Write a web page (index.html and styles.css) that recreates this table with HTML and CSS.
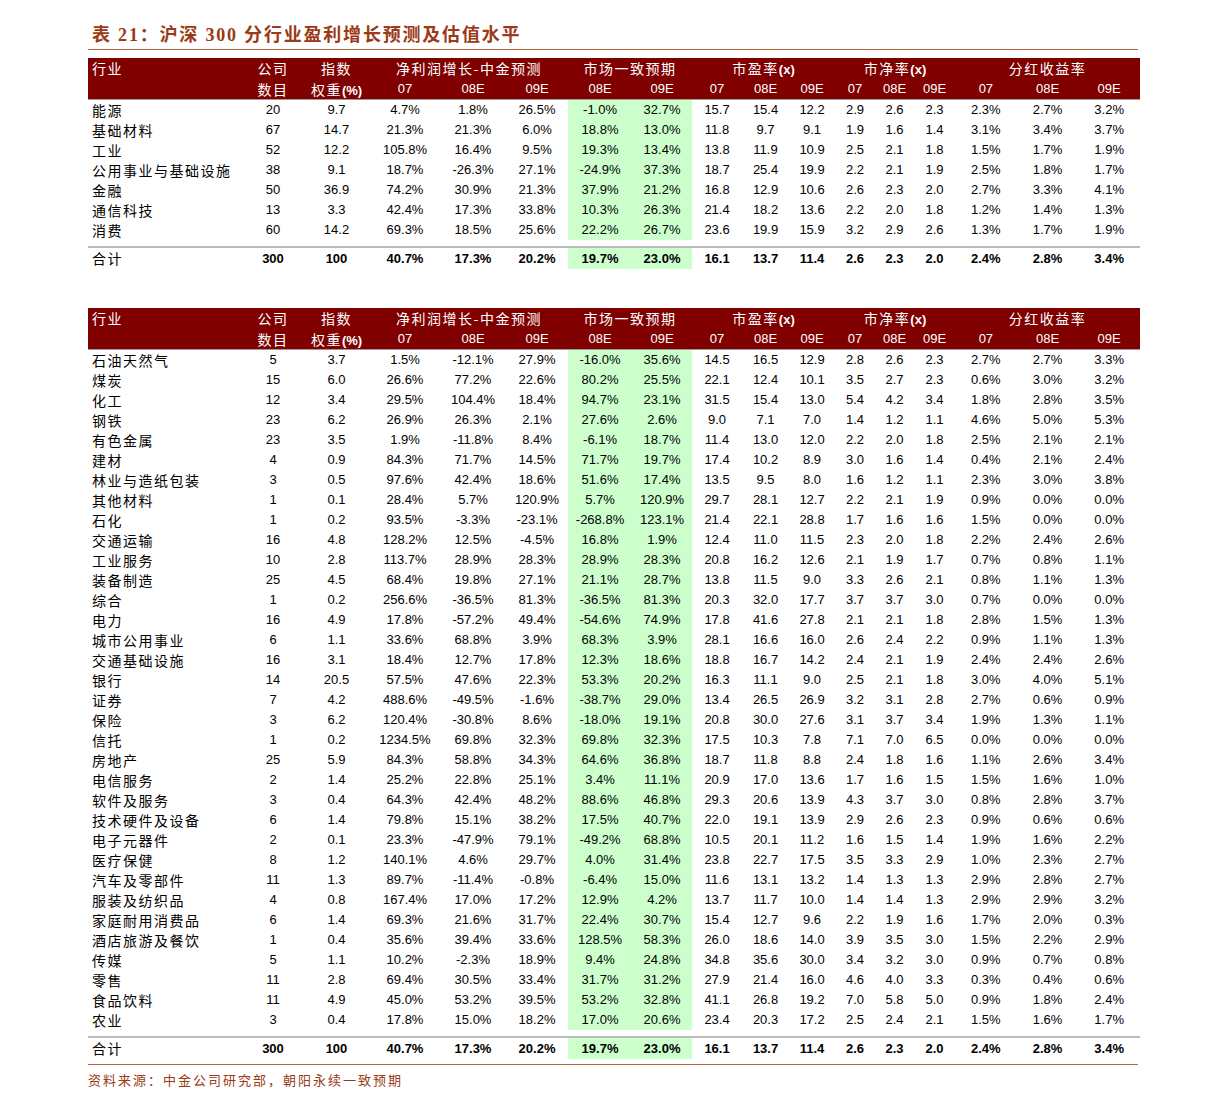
FILE: index.html
```html
<!DOCTYPE html>
<html lang="zh-CN">
<head>
<meta charset="utf-8">
<title>沪深300分行业盈利增长预测及估值水平</title>
<link rel="stylesheet" href="styles.css">
</head>
<body>
<div class="page">
  <div class="title">表 21：沪深 300 分行业盈利增长预测及估值水平</div>

  <table class="tbl t1">
    <colgroup>
      <col class="c-name"><col class="c-n"><col class="c-w"><col class="c-a"><col class="c-b"><col class="c-c">
      <col class="c-g1 g"><col class="c-g2 g">
      <col class="c-p"><col class="c-p2"><col class="c-p3">
      <col class="c-q"><col class="c-q2"><col class="c-q3">
      <col class="c-d"><col class="c-d"><col class="c-d">
    </colgroup>
    <thead>
      <tr class="h1">
        <th class="name cn">行业</th><th class="cn">公司</th><th class="cn">指数</th>
        <th class="cn" colspan="3">净利润增长-中金预测</th>
        <th class="cn" colspan="2">市场一致预期</th>
        <th class="cn" colspan="3">市盈率<b>(x)</b></th>
        <th class="cn" colspan="3">市净率<b>(x)</b></th>
        <th class="cn" colspan="3">分红收益率</th>
      </tr>
      <tr class="h2">
        <th></th><th class="cn">数目</th><th class="cn">权重<b>(%)</b></th>
        <th>07</th><th>08E</th><th>09E</th><th>08E</th><th>09E</th>
        <th>07</th><th>08E</th><th>09E</th><th>07</th><th>08E</th><th>09E</th>
        <th>07</th><th>08E</th><th>09E</th>
      </tr>
    </thead>
    <tbody>
      <tr><td class="name cn">能源</td><td>20</td><td>9.7</td><td>4.7%</td><td>1.8%</td><td>26.5%</td><td>-1.0%</td><td>32.7%</td><td>15.7</td><td>15.4</td><td>12.2</td><td>2.9</td><td>2.6</td><td>2.3</td><td>2.3%</td><td>2.7%</td><td>3.2%</td></tr>
      <tr><td class="name cn">基础材料</td><td>67</td><td>14.7</td><td>21.3%</td><td>21.3%</td><td>6.0%</td><td>18.8%</td><td>13.0%</td><td>11.8</td><td>9.7</td><td>9.1</td><td>1.9</td><td>1.6</td><td>1.4</td><td>3.1%</td><td>3.4%</td><td>3.7%</td></tr>
      <tr><td class="name cn">工业</td><td>52</td><td>12.2</td><td>105.8%</td><td>16.4%</td><td>9.5%</td><td>19.3%</td><td>13.4%</td><td>13.8</td><td>11.9</td><td>10.9</td><td>2.5</td><td>2.1</td><td>1.8</td><td>1.5%</td><td>1.7%</td><td>1.9%</td></tr>
      <tr><td class="name cn">公用事业与基础设施</td><td>38</td><td>9.1</td><td>18.7%</td><td>-26.3%</td><td>27.1%</td><td>-24.9%</td><td>37.3%</td><td>18.7</td><td>25.4</td><td>19.9</td><td>2.2</td><td>2.1</td><td>1.9</td><td>2.5%</td><td>1.8%</td><td>1.7%</td></tr>
      <tr><td class="name cn">金融</td><td>50</td><td>36.9</td><td>74.2%</td><td>30.9%</td><td>21.3%</td><td>37.9%</td><td>21.2%</td><td>16.8</td><td>12.9</td><td>10.6</td><td>2.6</td><td>2.3</td><td>2.0</td><td>2.7%</td><td>3.3%</td><td>4.1%</td></tr>
      <tr><td class="name cn">通信科技</td><td>13</td><td>3.3</td><td>42.4%</td><td>17.3%</td><td>33.8%</td><td>10.3%</td><td>26.3%</td><td>21.4</td><td>18.2</td><td>13.6</td><td>2.2</td><td>2.0</td><td>1.8</td><td>1.2%</td><td>1.4%</td><td>1.3%</td></tr>
      <tr><td class="name cn">消费</td><td>60</td><td>14.2</td><td>69.3%</td><td>18.5%</td><td>25.6%</td><td>22.2%</td><td>26.7%</td><td>23.6</td><td>19.9</td><td>15.9</td><td>3.2</td><td>2.9</td><td>2.6</td><td>1.3%</td><td>1.7%</td><td>1.9%</td></tr>
      <tr class="gap"><td colspan="17"></td></tr>
      <tr class="total"><td class="name cn">合计</td><td>300</td><td>100</td><td>40.7%</td><td>17.3%</td><td>20.2%</td><td>19.7%</td><td>23.0%</td><td>16.1</td><td>13.7</td><td>11.4</td><td>2.6</td><td>2.3</td><td>2.0</td><td>2.4%</td><td>2.8%</td><td>3.4%</td></tr>
    </tbody>
  </table>

  <table class="tbl t2">
    <colgroup>
      <col class="c-name"><col class="c-n"><col class="c-w"><col class="c-a"><col class="c-b"><col class="c-c">
      <col class="c-g1 g"><col class="c-g2 g">
      <col class="c-p"><col class="c-p2"><col class="c-p3">
      <col class="c-q"><col class="c-q2"><col class="c-q3">
      <col class="c-d"><col class="c-d"><col class="c-d">
    </colgroup>
    <thead>
      <tr class="h1">
        <th class="name cn">行业</th><th class="cn">公司</th><th class="cn">指数</th>
        <th class="cn" colspan="3">净利润增长-中金预测</th>
        <th class="cn" colspan="2">市场一致预期</th>
        <th class="cn" colspan="3">市盈率<b>(x)</b></th>
        <th class="cn" colspan="3">市净率<b>(x)</b></th>
        <th class="cn" colspan="3">分红收益率</th>
      </tr>
      <tr class="h2">
        <th></th><th class="cn">数目</th><th class="cn">权重<b>(%)</b></th>
        <th>07</th><th>08E</th><th>09E</th><th>08E</th><th>09E</th>
        <th>07</th><th>08E</th><th>09E</th><th>07</th><th>08E</th><th>09E</th>
        <th>07</th><th>08E</th><th>09E</th>
      </tr>
    </thead>
    <tbody>
      <tr><td class="name cn">石油天然气</td><td>5</td><td>3.7</td><td>1.5%</td><td>-12.1%</td><td>27.9%</td><td>-16.0%</td><td>35.6%</td><td>14.5</td><td>16.5</td><td>12.9</td><td>2.8</td><td>2.6</td><td>2.3</td><td>2.7%</td><td>2.7%</td><td>3.3%</td></tr>
      <tr><td class="name cn">煤炭</td><td>15</td><td>6.0</td><td>26.6%</td><td>77.2%</td><td>22.6%</td><td>80.2%</td><td>25.5%</td><td>22.1</td><td>12.4</td><td>10.1</td><td>3.5</td><td>2.7</td><td>2.3</td><td>0.6%</td><td>3.0%</td><td>3.2%</td></tr>
      <tr><td class="name cn">化工</td><td>12</td><td>3.4</td><td>29.5%</td><td>104.4%</td><td>18.4%</td><td>94.7%</td><td>23.1%</td><td>31.5</td><td>15.4</td><td>13.0</td><td>5.4</td><td>4.2</td><td>3.4</td><td>1.8%</td><td>2.8%</td><td>3.5%</td></tr>
      <tr><td class="name cn">钢铁</td><td>23</td><td>6.2</td><td>26.9%</td><td>26.3%</td><td>2.1%</td><td>27.6%</td><td>2.6%</td><td>9.0</td><td>7.1</td><td>7.0</td><td>1.4</td><td>1.2</td><td>1.1</td><td>4.6%</td><td>5.0%</td><td>5.3%</td></tr>
      <tr><td class="name cn">有色金属</td><td>23</td><td>3.5</td><td>1.9%</td><td>-11.8%</td><td>8.4%</td><td>-6.1%</td><td>18.7%</td><td>11.4</td><td>13.0</td><td>12.0</td><td>2.2</td><td>2.0</td><td>1.8</td><td>2.5%</td><td>2.1%</td><td>2.1%</td></tr>
      <tr><td class="name cn">建材</td><td>4</td><td>0.9</td><td>84.3%</td><td>71.7%</td><td>14.5%</td><td>71.7%</td><td>19.7%</td><td>17.4</td><td>10.2</td><td>8.9</td><td>3.0</td><td>1.6</td><td>1.4</td><td>0.4%</td><td>2.1%</td><td>2.4%</td></tr>
      <tr><td class="name cn">林业与造纸包装</td><td>3</td><td>0.5</td><td>97.6%</td><td>42.4%</td><td>18.6%</td><td>51.6%</td><td>17.4%</td><td>13.5</td><td>9.5</td><td>8.0</td><td>1.6</td><td>1.2</td><td>1.1</td><td>2.3%</td><td>3.0%</td><td>3.8%</td></tr>
      <tr><td class="name cn">其他材料</td><td>1</td><td>0.1</td><td>28.4%</td><td>5.7%</td><td>120.9%</td><td>5.7%</td><td>120.9%</td><td>29.7</td><td>28.1</td><td>12.7</td><td>2.2</td><td>2.1</td><td>1.9</td><td>0.9%</td><td>0.0%</td><td>0.0%</td></tr>
      <tr><td class="name cn">石化</td><td>1</td><td>0.2</td><td>93.5%</td><td>-3.3%</td><td>-23.1%</td><td>-268.8%</td><td>123.1%</td><td>21.4</td><td>22.1</td><td>28.8</td><td>1.7</td><td>1.6</td><td>1.6</td><td>1.5%</td><td>0.0%</td><td>0.0%</td></tr>
      <tr><td class="name cn">交通运输</td><td>16</td><td>4.8</td><td>128.2%</td><td>12.5%</td><td>-4.5%</td><td>16.8%</td><td>1.9%</td><td>12.4</td><td>11.0</td><td>11.5</td><td>2.3</td><td>2.0</td><td>1.8</td><td>2.2%</td><td>2.4%</td><td>2.6%</td></tr>
      <tr><td class="name cn">工业服务</td><td>10</td><td>2.8</td><td>113.7%</td><td>28.9%</td><td>28.3%</td><td>28.9%</td><td>28.3%</td><td>20.8</td><td>16.2</td><td>12.6</td><td>2.1</td><td>1.9</td><td>1.7</td><td>0.7%</td><td>0.8%</td><td>1.1%</td></tr>
      <tr><td class="name cn">装备制造</td><td>25</td><td>4.5</td><td>68.4%</td><td>19.8%</td><td>27.1%</td><td>21.1%</td><td>28.7%</td><td>13.8</td><td>11.5</td><td>9.0</td><td>3.3</td><td>2.6</td><td>2.1</td><td>0.8%</td><td>1.1%</td><td>1.3%</td></tr>
      <tr><td class="name cn">综合</td><td>1</td><td>0.2</td><td>256.6%</td><td>-36.5%</td><td>81.3%</td><td>-36.5%</td><td>81.3%</td><td>20.3</td><td>32.0</td><td>17.7</td><td>3.7</td><td>3.7</td><td>3.0</td><td>0.7%</td><td>0.0%</td><td>0.0%</td></tr>
      <tr><td class="name cn">电力</td><td>16</td><td>4.9</td><td>17.8%</td><td>-57.2%</td><td>49.4%</td><td>-54.6%</td><td>74.9%</td><td>17.8</td><td>41.6</td><td>27.8</td><td>2.1</td><td>2.1</td><td>1.8</td><td>2.8%</td><td>1.5%</td><td>1.3%</td></tr>
      <tr><td class="name cn">城市公用事业</td><td>6</td><td>1.1</td><td>33.6%</td><td>68.8%</td><td>3.9%</td><td>68.3%</td><td>3.9%</td><td>28.1</td><td>16.6</td><td>16.0</td><td>2.6</td><td>2.4</td><td>2.2</td><td>0.9%</td><td>1.1%</td><td>1.3%</td></tr>
      <tr><td class="name cn">交通基础设施</td><td>16</td><td>3.1</td><td>18.4%</td><td>12.7%</td><td>17.8%</td><td>12.3%</td><td>18.6%</td><td>18.8</td><td>16.7</td><td>14.2</td><td>2.4</td><td>2.1</td><td>1.9</td><td>2.4%</td><td>2.4%</td><td>2.6%</td></tr>
      <tr><td class="name cn">银行</td><td>14</td><td>20.5</td><td>57.5%</td><td>47.6%</td><td>22.3%</td><td>53.3%</td><td>20.2%</td><td>16.3</td><td>11.1</td><td>9.0</td><td>2.5</td><td>2.1</td><td>1.8</td><td>3.0%</td><td>4.0%</td><td>5.1%</td></tr>
      <tr><td class="name cn">证券</td><td>7</td><td>4.2</td><td>488.6%</td><td>-49.5%</td><td>-1.6%</td><td>-38.7%</td><td>29.0%</td><td>13.4</td><td>26.5</td><td>26.9</td><td>3.2</td><td>3.1</td><td>2.8</td><td>2.7%</td><td>0.6%</td><td>0.9%</td></tr>
      <tr><td class="name cn">保险</td><td>3</td><td>6.2</td><td>120.4%</td><td>-30.8%</td><td>8.6%</td><td>-18.0%</td><td>19.1%</td><td>20.8</td><td>30.0</td><td>27.6</td><td>3.1</td><td>3.7</td><td>3.4</td><td>1.9%</td><td>1.3%</td><td>1.1%</td></tr>
      <tr><td class="name cn">信托</td><td>1</td><td>0.2</td><td>1234.5%</td><td>69.8%</td><td>32.3%</td><td>69.8%</td><td>32.3%</td><td>17.5</td><td>10.3</td><td>7.8</td><td>7.1</td><td>7.0</td><td>6.5</td><td>0.0%</td><td>0.0%</td><td>0.0%</td></tr>
      <tr><td class="name cn">房地产</td><td>25</td><td>5.9</td><td>84.3%</td><td>58.8%</td><td>34.3%</td><td>64.6%</td><td>36.8%</td><td>18.7</td><td>11.8</td><td>8.8</td><td>2.4</td><td>1.8</td><td>1.6</td><td>1.1%</td><td>2.6%</td><td>3.4%</td></tr>
      <tr><td class="name cn">电信服务</td><td>2</td><td>1.4</td><td>25.2%</td><td>22.8%</td><td>25.1%</td><td>3.4%</td><td>11.1%</td><td>20.9</td><td>17.0</td><td>13.6</td><td>1.7</td><td>1.6</td><td>1.5</td><td>1.5%</td><td>1.6%</td><td>1.0%</td></tr>
      <tr><td class="name cn">软件及服务</td><td>3</td><td>0.4</td><td>64.3%</td><td>42.4%</td><td>48.2%</td><td>88.6%</td><td>46.8%</td><td>29.3</td><td>20.6</td><td>13.9</td><td>4.3</td><td>3.7</td><td>3.0</td><td>0.8%</td><td>2.8%</td><td>3.7%</td></tr>
      <tr><td class="name cn">技术硬件及设备</td><td>6</td><td>1.4</td><td>79.8%</td><td>15.1%</td><td>38.2%</td><td>17.5%</td><td>40.7%</td><td>22.0</td><td>19.1</td><td>13.9</td><td>2.9</td><td>2.6</td><td>2.3</td><td>0.9%</td><td>0.6%</td><td>0.6%</td></tr>
      <tr><td class="name cn">电子元器件</td><td>2</td><td>0.1</td><td>23.3%</td><td>-47.9%</td><td>79.1%</td><td>-49.2%</td><td>68.8%</td><td>10.5</td><td>20.1</td><td>11.2</td><td>1.6</td><td>1.5</td><td>1.4</td><td>1.9%</td><td>1.6%</td><td>2.2%</td></tr>
      <tr><td class="name cn">医疗保健</td><td>8</td><td>1.2</td><td>140.1%</td><td>4.6%</td><td>29.7%</td><td>4.0%</td><td>31.4%</td><td>23.8</td><td>22.7</td><td>17.5</td><td>3.5</td><td>3.3</td><td>2.9</td><td>1.0%</td><td>2.3%</td><td>2.7%</td></tr>
      <tr><td class="name cn">汽车及零部件</td><td>11</td><td>1.3</td><td>89.7%</td><td>-11.4%</td><td>-0.8%</td><td>-6.4%</td><td>15.0%</td><td>11.6</td><td>13.1</td><td>13.2</td><td>1.4</td><td>1.3</td><td>1.3</td><td>2.9%</td><td>2.8%</td><td>2.7%</td></tr>
      <tr><td class="name cn">服装及纺织品</td><td>4</td><td>0.8</td><td>167.4%</td><td>17.0%</td><td>17.2%</td><td>12.9%</td><td>4.2%</td><td>13.7</td><td>11.7</td><td>10.0</td><td>1.4</td><td>1.4</td><td>1.3</td><td>2.9%</td><td>2.9%</td><td>3.2%</td></tr>
      <tr><td class="name cn">家庭耐用消费品</td><td>6</td><td>1.4</td><td>69.3%</td><td>21.6%</td><td>31.7%</td><td>22.4%</td><td>30.7%</td><td>15.4</td><td>12.7</td><td>9.6</td><td>2.2</td><td>1.9</td><td>1.6</td><td>1.7%</td><td>2.0%</td><td>0.3%</td></tr>
      <tr><td class="name cn">酒店旅游及餐饮</td><td>1</td><td>0.4</td><td>35.6%</td><td>39.4%</td><td>33.6%</td><td>128.5%</td><td>58.3%</td><td>26.0</td><td>18.6</td><td>14.0</td><td>3.9</td><td>3.5</td><td>3.0</td><td>1.5%</td><td>2.2%</td><td>2.9%</td></tr>
      <tr><td class="name cn">传媒</td><td>5</td><td>1.1</td><td>10.2%</td><td>-2.3%</td><td>18.9%</td><td>9.4%</td><td>24.8%</td><td>34.8</td><td>35.6</td><td>30.0</td><td>3.4</td><td>3.2</td><td>3.0</td><td>0.9%</td><td>0.7%</td><td>0.8%</td></tr>
      <tr><td class="name cn">零售</td><td>11</td><td>2.8</td><td>69.4%</td><td>30.5%</td><td>33.4%</td><td>31.7%</td><td>31.2%</td><td>27.9</td><td>21.4</td><td>16.0</td><td>4.6</td><td>4.0</td><td>3.3</td><td>0.3%</td><td>0.4%</td><td>0.6%</td></tr>
      <tr><td class="name cn">食品饮料</td><td>11</td><td>4.9</td><td>45.0%</td><td>53.2%</td><td>39.5%</td><td>53.2%</td><td>32.8%</td><td>41.1</td><td>26.8</td><td>19.2</td><td>7.0</td><td>5.8</td><td>5.0</td><td>0.9%</td><td>1.8%</td><td>2.4%</td></tr>
      <tr><td class="name cn">农业</td><td>3</td><td>0.4</td><td>17.8%</td><td>15.0%</td><td>18.2%</td><td>17.0%</td><td>20.6%</td><td>23.4</td><td>20.3</td><td>17.2</td><td>2.5</td><td>2.4</td><td>2.1</td><td>1.5%</td><td>1.6%</td><td>1.7%</td></tr>
      <tr class="gap"><td colspan="17"></td></tr>
      <tr class="total"><td class="name cn">合计</td><td>300</td><td>100</td><td>40.7%</td><td>17.3%</td><td>20.2%</td><td>19.7%</td><td>23.0%</td><td>16.1</td><td>13.7</td><td>11.4</td><td>2.6</td><td>2.3</td><td>2.0</td><td>2.4%</td><td>2.8%</td><td>3.4%</td></tr>
    </tbody>
  </table>

  <div class="source cn">资料来源：中金公司研究部，朝阳永续一致预期</div>
</div>
</body>
</html>
```

FILE: styles.css
```css
body {
  margin: 0;
  background: #ffffff;
  color: #000000;
  font-family: "Liberation Sans", "Noto Sans CJK SC", sans-serif;
}

.page {
  padding: 23px 0 0 88px;
  width: 1052px;
}

.title {
  font-family: "Liberation Serif", "Noto Sans CJK SC", serif;
  font-weight: bold;
  font-size: 18px;
  line-height: 24px;
  letter-spacing: 1.8px;
  color: #9a3a16;
  padding: 0 0 2px 4px;
  margin-right: 2px;
  border-bottom: 1px solid #b9643a;
}

.tbl {
  border-collapse: collapse;
  table-layout: fixed;
  width: 1052px;
}

.t1 { margin-top: 8px; }
.t2 { margin-top: 39px; }

.c-name { width: 155px; }
.c-n { width: 60px; }
.c-w { width: 67px; }
.c-a { width: 70px; }
.c-b { width: 66px; }
.c-c { width: 62px; }
.c-g1 { width: 64px; }
.c-g2 { width: 60px; }
.c-p { width: 50px; }
.c-p2 { width: 47px; }
.c-p3 { width: 46px; }
.c-q { width: 40px; }
.c-q2 { width: 39px; }
.c-q3 { width: 41px; }
.c-d { width: 61.67px; }

col.g { background: #ccffcc; }

.tbl th,
.tbl td {
  padding: 0;
  height: 20px;
  line-height: 20px;
  font-size: 13px;
  text-align: center;
  white-space: nowrap;
  overflow: hidden;
}

.cn {
  font-family: "Noto Sans CJK SC", sans-serif;
  font-size: 14px;
  letter-spacing: 1.5px;
}

.tbl th.cn,
.tbl td.cn { font-size: 14px; }

.tbl .cn b {
  font-family: "Liberation Sans", sans-serif;
  font-size: 13px;
  font-weight: bold;
  letter-spacing: 0;
  line-height: 1;
}

.tbl .name {
  text-align: left;
  padding-left: 4px;
}

.tbl thead th {
  background: #800000;
  color: #ffffff;
  font-weight: normal;
}

.tbl tr.h1 th { height: 21px; line-height: 21px; }
.tbl tr.h2 th { border-bottom: 1px solid #9a9a9a; }

.tbl tr.gap td { height: 6px; line-height: 6px; font-size: 1px; }

.tbl tr.total td {
  border-top: 2px solid #bcbcbc;
  font-weight: bold;
  height: 21px;
  line-height: 21px;
}

.tbl tr.total td.cn { font-weight: normal; }

.source {
  margin-top: 5px;
  margin-right: 2px;
  border-top: 1px solid #b9643a;
  padding-top: 6px;
  font-size: 13px;
  line-height: 18px;
  letter-spacing: 2px;
  color: #9a3a16;
}
```
